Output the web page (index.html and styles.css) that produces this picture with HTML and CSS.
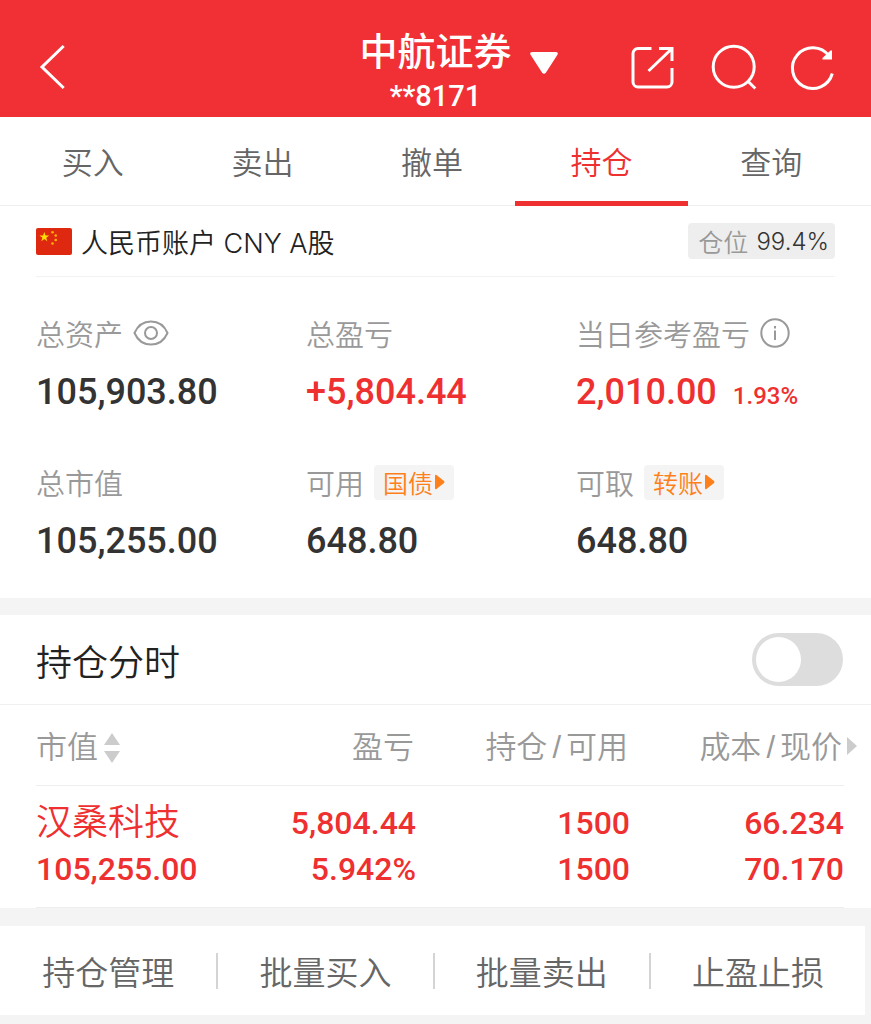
FILE: index.html
```html
<!DOCTYPE html>
<html lang="zh-CN">
<head>
    <meta charset="UTF-8">
    <meta name="viewport" content="width=device-width, initial-scale=1.0">
    <title>持仓</title>
    <link rel="stylesheet" href="styles.css">
</head>
<body>
    <header class="header">
        <button type="button" class="icon-btn back-btn" aria-label="返回">
            <svg width="44" height="44" viewBox="0 0 44 44"><path d="M27.700 1 6 22l21.700 21" /></svg>
        </button>
        <div class="account">
            <h1>中航证券</h1>
            <p>**8171</p>
        </div>
        <div class="header-right">
            <button type="button" class="icon-btn caret-btn" aria-label="切换账户">
                <svg width="28" height="22" viewBox="0 0 28 22"><path class="fill" d="M2.500 0h23q3.500 0 1.800 3L16 20.500q-2 2.500-4 0L.7 3Q-1 0 2.500 0z" /></svg>
            </button>
            <div class="header-icons">
                <button type="button" class="icon-btn" aria-label="分享">
                    <svg width="44" height="44" viewBox="0 0 44 44"><path d="M20.500 3.500H7a5 5 0 0 0-5 5V37a5 5 0 0 0 5 5h29a5 5 0 0 0 5-5V23M28 3.500h13V16M41 3.500 17.500 26" /></svg>
                </button>
                <button type="button" class="icon-btn" aria-label="搜索">
                    <svg width="44" height="44" viewBox="0 0 44 44"><circle cx="22.700" cy="21.700" r="20.500" /><path d="m36.700 36 7.600 7.500" /></svg>
                </button>
                <button type="button" class="icon-btn" aria-label="刷新">
                    <svg width="44" height="44" viewBox="0 0 44 44"><path d="M41.300 28.500A20.300 20.300 0 1 1 38 11" /><path class="fill" d="M39.500 5.500H41v9h-9.500V13z" /></svg>
                </button>
            </div>
        </div>
    </header>

    <nav class="tabs">
        <a href="#">买入</a>
        <a href="#">卖出</a>
        <a href="#">撤单</a>
        <a href="#" class="active">持仓</a>
        <a href="#">查询</a>
    </nav>

    <section class="assets">
        <div class="assets-title">
            <svg class="flag" width="36" height="27" viewBox="0 0 36 27">
                <rect width="36" height="27" rx="2" fill="#de2910" />
                <path fill="#ffde00" d="m8.300 4 1.200 3.500h3.700l-3 2.200 1.100 3.600-3-2.200-3 2.200 1.100-3.600-3-2.200h3.700z" />
                <g fill="#ffb400"><circle cx="16.500" cy="4.200" r="1.300" /><circle cx="19.700" cy="7.500" r="1.300" /><circle cx="19.700" cy="12" r="1.300" /><circle cx="16.500" cy="15.500" r="1.300" /></g>
            </svg>
            <h2>人民币账户 CNY A股</h2>
            <div class="ratio"><span>仓位</span><b>99.4%</b></div>
        </div>
        <div class="assets-grid">
            <div class="item">
                <div class="label">总资产
                    <button type="button" class="icon-btn gray" aria-label="隐藏金额">
                        <svg width="36" height="26" viewBox="0 0 36 26"><path d="M1.500 13C5 5 11 1.500 18 1.500S31 5 34.500 13C31 21 25 24.500 18 24.500S5 21 1.500 13z" /><circle cx="18" cy="13" r="6" /></svg>
                    </button>
                </div>
                <div class="value">105,903.80</div>
            </div>
            <div class="item">
                <div class="label">总盈亏</div>
                <div class="value red">+5,804.44</div>
            </div>
            <div class="item">
                <div class="label">当日参考盈亏
                    <button type="button" class="icon-btn gray" aria-label="说明">
                        <svg width="30" height="30" viewBox="0 0 30 30"><circle cx="15" cy="15" r="13.700" /><path d="M15 12.500V22M15 8v2.500" /></svg>
                    </button>
                </div>
                <div class="value red">2,010.00<small>1.93%</small></div>
            </div>
            <div class="item">
                <div class="label">总市值</div>
                <div class="value">105,255.00</div>
            </div>
            <div class="item">
                <div class="label">可用
                    <button type="button" class="tag">国债<svg width="10" height="16" viewBox="0 0 10 16"><path d="M0 2q0-2 1.500-1L9 7q1 1 0 2l-7.500 6Q0 16 0 14z" /></svg></button>
                </div>
                <div class="value">648.80</div>
            </div>
            <div class="item">
                <div class="label">可取
                    <button type="button" class="tag">转账<svg width="10" height="16" viewBox="0 0 10 16"><path d="M0 2q0-2 1.500-1L9 7q1 1 0 2l-7.500 6Q0 16 0 14z" /></svg></button>
                </div>
                <div class="value">648.80</div>
            </div>
        </div>
    </section>

    <section class="positions">
        <div class="switch-row">
            <label for="time_chart">持仓分时</label>
            <input type="checkbox" role="switch" id="time_chart" class="switch">
        </div>
        <div class="table-box">
            <table>
                <thead>
                    <tr>
                        <th>市值<svg class="sort" width="16" height="30" viewBox="0 0 16 30"><path d="M8 0l8 12H0zM0 18h16L8 30z" /></svg></th>
                        <th class="col-profit">盈亏</th>
                        <th class="col-amount">持仓<i>/</i>可用</th>
                        <th class="col-price">成本<i>/</i>现价<svg class="more" width="10" height="18" viewBox="0 0 10 18"><path d="M0 0l10 9-10 9z" /></svg></th>
                    </tr>
                </thead>
                <tbody>
                    <tr>
                        <td><span class="name">汉桑科技</span>105,255.00</td>
                        <td><span>5,804.44</span>5.942%</td>
                        <td><span>1500</span>1500</td>
                        <td><span>66.234</span>70.170</td>
                    </tr>
                </tbody>
            </table>
        </div>
    </section>

    <footer class="actions">
        <button type="button">持仓管理</button>
        <button type="button">批量买入</button>
        <button type="button">批量卖出</button>
        <button type="button">止盈止损</button>
    </footer>
</body>
</html>
```
FILE: styles.css
```css
* {
    box-sizing: border-box;
}

body {
    margin: 0;
    background-color: #f4f4f4;
    color: #333;
    font-family: "Liberation Sans", "Noto Sans CJK SC", sans-serif;
    font-weight: 350;
}

h1, h2, p {
    margin: 0;
}

button {
    font-family: inherit;
    font-weight: inherit;
    border: none;
    padding: 0;
    background: none;
    cursor: pointer;
}

a {
    text-decoration: none;
    color: inherit;
}

svg {
    display: block;
    overflow: visible;
}

.icon-btn {
    color: #fff;
}

.icon-btn path, .icon-btn circle {
    fill: none;
    stroke: currentColor;
    stroke-width: 3;
}

.icon-btn .fill {
    fill: currentColor;
    stroke: none;
}

.gray {
    color: #999;
}

.gray path, .gray circle {
    stroke-width: 2;
}

.red {
    color: #ee3030;
}

/* header */
.header {
    display: grid;
    grid-template-columns: 1fr auto 1fr;
    align-items: center;
    padding: 17px 36px 0;
    background-color: #f03035;
    color: #fff;
}

.back-btn {
    justify-self: start;
}

.account {
    padding-top: 12px;
    text-align: center;
}

.account h1 {
    font-size: 38px;
    line-height: 46px;
    font-weight: 500;
}

.account p {
    font-family: Roboto, sans-serif;
    font-size: 29px;
    line-height: 42px;
    font-weight: 500;
}

.header-right {
    display: flex;
    align-items: center;
    justify-content: space-between;
    padding-left: 18px;
}

.caret-btn {
    padding-bottom: 8px;
}

.header-icons {
    display: flex;
    gap: 36px;
}

/* tabs */
.tabs {
    display: flex;
    padding: 0 15px 0 8px;
    background-color: #fff;
    border-bottom: 1px solid #eee;
}

.tabs a {
    position: relative;
    flex: 1;
    padding-top: 6px;
    text-align: center;
    font-size: 31px;
    line-height: 82px;
    color: #666;
}

.tabs .active {
    color: #ee3030;
}

.tabs .active::after {
    content: "";
    position: absolute;
    left: -2px;
    right: -2px;
    bottom: -1px;
    height: 5px;
    background-color: #ee3030;
}

/* assets */
.assets {
    background-color: #fff;
    padding-bottom: 18px;
}

.assets-title {
    display: flex;
    align-items: center;
    height: 71px;
    margin: 0 36px;
    border-bottom: 1px solid #f2f2f2;
}

.assets-title h2 {
    margin-left: 9px;
    font-family: Inter, "Noto Sans CJK SC", sans-serif;
    font-size: 27px;
    font-weight: inherit;
    color: #222;
}

.ratio {
    display: flex;
    align-items: center;
    gap: 8px;
    height: 36px;
    margin-left: auto;
    padding: 0 6px 0 10px;
    border-radius: 4px;
    background-color: #eee;
    font-size: 25px;
}

.ratio span {
    color: #999;
}

.ratio b {
    font-family: Inter, sans-serif;
    font-size: 24px;
    font-weight: inherit;
}

.assets-grid {
    display: grid;
    grid-template-columns: repeat(3, 1fr);
    row-gap: 30px;
    padding: 35px 25px 0 36px;
}

.label {
    display: flex;
    align-items: center;
    gap: 10px;
    height: 42px;
    font-size: 29px;
    color: #999;
}

.value {
    padding: 14px 0 15px;
    font-family: Roboto, sans-serif;
    font-size: 36px;
    line-height: 48px;
    font-weight: 500;
    white-space: nowrap;
}

.value small {
    margin-left: 16px;
    font-size: 24px;
    line-height: 24px;
}

.tag {
    display: flex;
    align-items: center;
    gap: 2px;
    height: 35px;
    padding: 0 9px;
    border-radius: 4px;
    background-color: #f4f4f4;
    font-size: 25px;
    color: #ff801a;
}

.tag path {
    fill: #ff801a;
}

/* positions */
.positions {
    margin-top: 17px;
    background-color: #fff;
}

.switch-row {
    display: flex;
    align-items: center;
    justify-content: space-between;
    height: 90px;
    padding: 0 28px 0 36px;
    border-bottom: 1px solid #f0f0f0;
    font-size: 36px;
    color: #222;
}

.switch {
    appearance: none;
    width: 91px;
    height: 53px;
    margin: 0;
    padding: 4px;
    border-radius: 27px;
    background-color: #ddd;
    cursor: pointer;
}

.switch::before {
    content: "";
    display: block;
    width: 45px;
    height: 45px;
    border-radius: 50%;
    background-color: #fff;
}

.switch:checked {
    background-color: #ee3030;
}

.switch:checked::before {
    margin-left: auto;
}

.table-box {
    padding: 0 27px 0 36px;
}

table {
    width: 100%;
    table-layout: fixed;
    border-collapse: separate;
    border-spacing: 0;
}

.col-profit {
    width: 170px;
}

.col-amount, .col-price {
    width: 214px;
}

th {
    position: relative;
    height: 81px;
    padding: 0 2px 2px 0;
    border-bottom: 1px solid #eee;
    font-size: 31px;
    font-weight: inherit;
    text-align: right;
    color: #999;
}

th i {
    margin: 0 5px;
    font-style: normal;
}

th path {
    fill: #ccc;
}

th:first-child, td:first-child {
    text-align: left;
}

.sort {
    display: inline-block;
    margin-left: 6px;
    vertical-align: -5px;
}

.more {
    position: absolute;
    left: 100%;
    top: 32px;
    margin-left: 3px;
}

td {
    padding: 14px 0 15px;
    border-bottom: 1px solid #eee;
    font-family: Roboto, "Noto Sans CJK SC", sans-serif;
    font-size: 32px;
    line-height: 46px;
    font-weight: 500;
    text-align: right;
    color: #ee3030;
}

td span {
    display: block;
}

td .name {
    height: 46px;
    font-size: 36px;
    font-weight: 350;
}

/* bottom buttons */
.actions {
    display: flex;
    margin: 18px 6px 0 0;
    background-color: #fff;
}

.actions button {
    display: flex;
    flex: 1;
    align-items: center;
    justify-content: center;
    height: 89px;
    font-size: 33px;
    color: #666;
}

.actions button + button::before {
    content: "";
    width: 2px;
    height: 36px;
    margin-right: auto;
    background-color: #d4d4d4;
}

.actions button + button::after {
    content: "";
    margin-left: auto;
}
```
